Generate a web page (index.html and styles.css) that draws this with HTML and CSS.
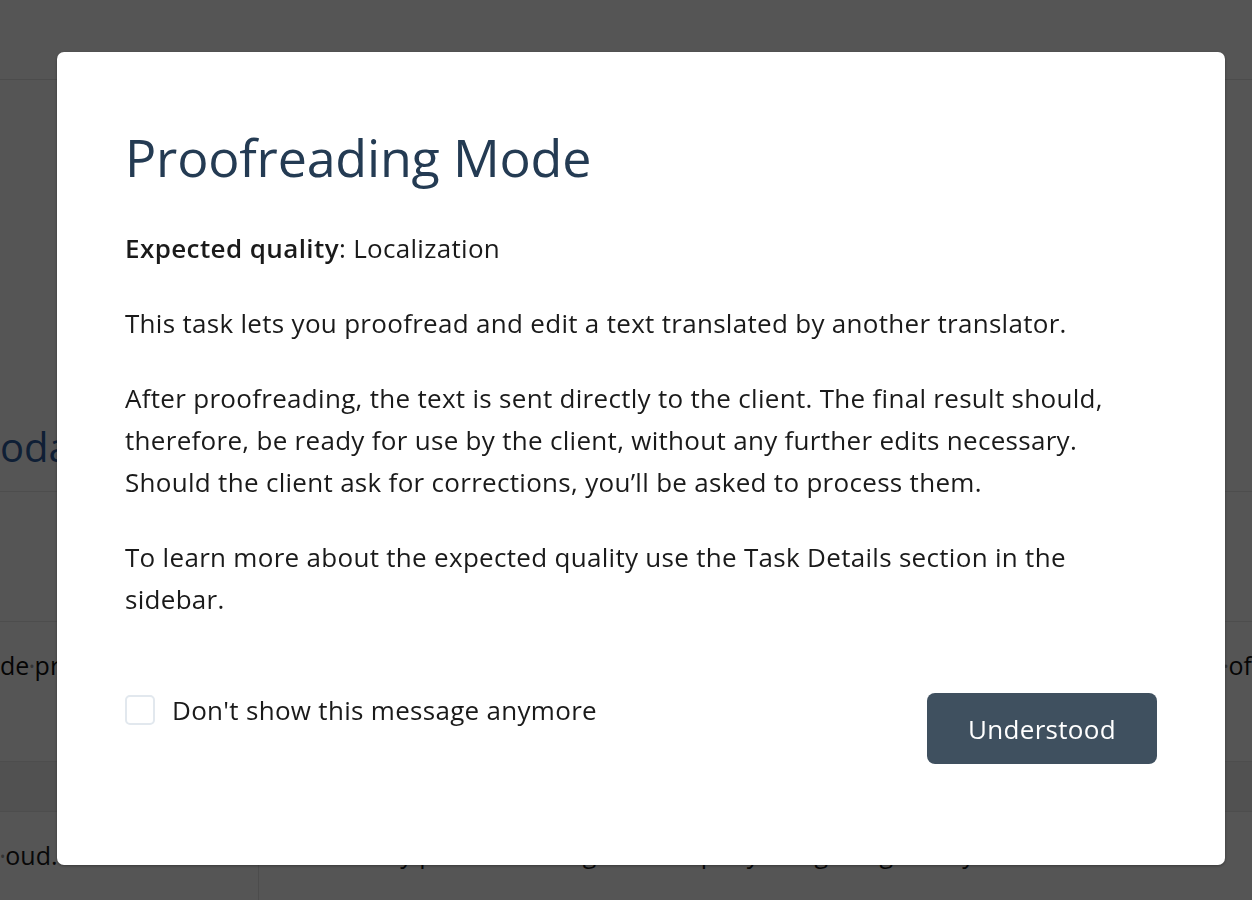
FILE: index.html
```html
<!DOCTYPE html>
<html lang="en">
<head>
<meta charset="utf-8">
<title>Proofreading Mode</title>
<link rel="stylesheet" href="styles.css">
</head>
<body>
<div class="page">
  <header class="app-header"></header>
  <div class="app-body">
    <div class="row row-title"><span class="doc-title">odat</span></div>
    <div class="row row-empty"></div>
    <div class="row row-text"><span>de<i class="ws">•</i>pro</span><span><i class="ws">•</i>of</span></div>
    <div class="row row-band"></div>
    <div class="row row-split">
      <div class="cell-left"><i class="ws">•</i>oud.</div>
      <div class="cell-right">Any previous changes are kept by using the glossary</div>
    </div>
  </div>
</div>

<div class="overlay">
  <div class="modal" role="dialog" aria-labelledby="modal-title">
    <h1 class="modal-title" id="modal-title">Proofreading Mode</h1>
    <p class="modal-text"><strong>Expected quality</strong>: Localization</p>
    <p class="modal-text">This task lets you proofread and edit a text translated by another translator.</p>
    <p class="modal-text">After proofreading, the text is sent directly to the client. The final result should, therefore, be ready for use by the client, without any further edits necessary. Should the client ask for corrections, you’ll be asked to process them.</p>
    <p class="modal-text">To learn more about the expected quality use the Task Details section in the sidebar.</p>
    <div class="modal-footer">
      <label class="check">
        <span class="check-box"></span>
        <span class="check-label">Don't show this message anymore</span>
      </label>
      <button class="btn-primary" type="button">Understood</button>
    </div>
  </div>
</div>
</body>
</html>
```

FILE: styles.css
```css
* { box-sizing: border-box; }

html, body {
  margin: 0;
  padding: 0;
  height: 100%;
}

body {
  font-family: "Open Sans", "Noto Sans", "Liberation Sans", sans-serif;
  background: #ffffff;
  color: #1a1a1a;
  overflow: hidden;
}

/* ---------- background application ---------- */
.page {
  width: 1252px;
  height: 900px;
  display: flex;
  flex-direction: column;
}

.app-header {
  height: 80px;
  border-bottom: 1px solid #e3e3e3;
  flex: none;
}

.app-body {
  display: flex;
  flex-direction: column;
}

.row {
  border-bottom: 1px solid #e6e6e6;
  display: flex;
  white-space: nowrap;
  overflow: hidden;
  flex: none;
}

.ws {
  font-style: normal;
  color: #999;
  font-size: 14px;
  vertical-align: 3px;
}

.row-title {
  height: 412px;
  padding-top: 339px;
}

.doc-title {
  font-size: 40px;
  color: #2f5d9e;
  line-height: 56px;
}

.row-empty {
  height: 130px;
}

.row-text {
  height: 140px;
  padding-top: 27px;
  font-size: 25px;
  line-height: 32px;
  color: #111;
  justify-content: space-between;
}

.row-band {
  height: 50px;
  background: #f3f3f3;
}

.row-split {
  height: 100px;
  border-bottom: none;
}

.cell-left {
  width: 259px;
  border-right: 1px solid #e3e3e3;
  font-size: 25px;
  line-height: 32px;
  padding-top: 27px;
}

.cell-right {
  flex: 1;
  font-size: 25px;
  line-height: 32px;
  padding: 25px 0 0 110px;
}

/* ---------- overlay + modal ---------- */
.overlay {
  position: fixed;
  inset: 0;
  background: rgba(0, 0, 0, 0.666);
  display: flex;
  align-items: flex-start;
  justify-content: flex-start;
  padding: 52px 0 0 57px;
}

.modal {
  width: 1168px;
  height: 813px;
  background: #ffffff;
  border-radius: 7px;
  box-shadow: 0 1px 3px rgba(0, 0, 0, 0.35);
  padding: 74px 68px 0 68px;
  display: flex;
  flex-direction: column;
}

.modal-title {
  margin: 0 0 39px 0;
  font-size: 52px;
  line-height: 62px;
  font-weight: 400;
  color: #243b53;
  letter-spacing: -0.2px;
}

.modal-text {
  margin: 0 0 33px 0;
  font-size: 26px;
  letter-spacing: 0.3px;
  line-height: 42px;
  color: #1a1a1a;
}

.modal-text strong {
  font-weight: 600;
  letter-spacing: 0.4px;
}

.modal-footer {
  margin-top: 40px;
  display: flex;
  justify-content: space-between;
  align-items: flex-start;
}

.check {
  display: flex;
  align-items: center;
  gap: 17px;
  margin-top: 2px;
  cursor: pointer;
}

.check-box {
  width: 30px;
  height: 30px;
  border: 2px solid #e2e8ee;
  border-radius: 5px;
  background: #fff;
  flex: none;
}

.check-label {
  font-size: 26px;
  letter-spacing: 0.3px;
  line-height: 30px;
  color: #1a1a1a;
}

.btn-primary {
  width: 230px;
  height: 71px;
  border: none;
  border-radius: 8px;
  background: #3f505f;
  color: #ffffff;
  font-family: inherit;
  font-size: 26px;
  letter-spacing: 0.3px;
  padding: 0;
  cursor: pointer;
}
```
